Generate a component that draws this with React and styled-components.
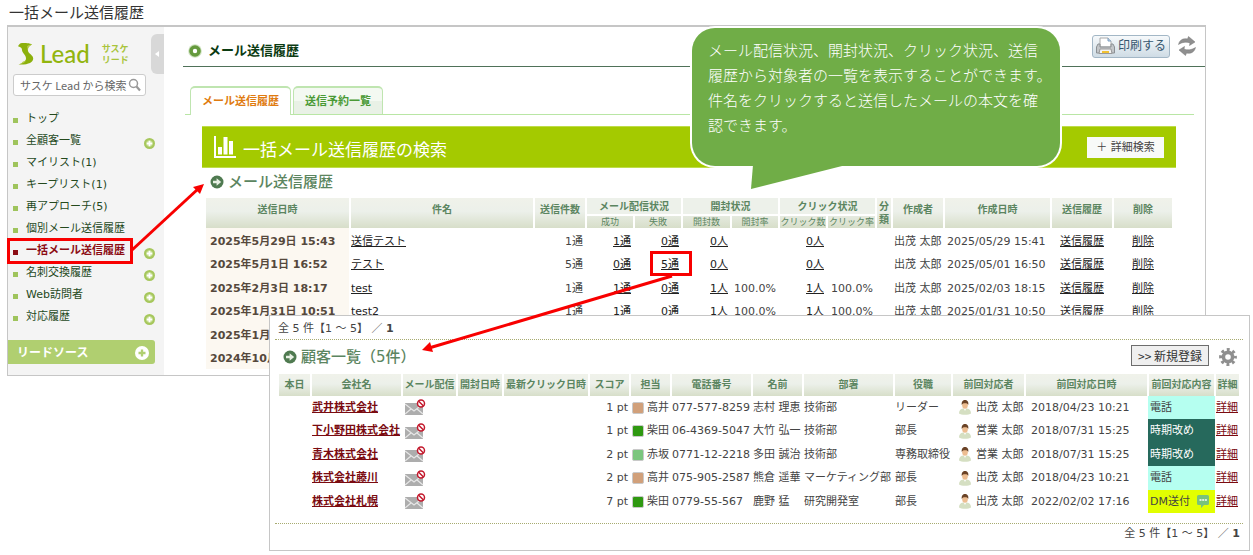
import React from "react";
import styled, { createGlobalStyle, css } from "styled-components";

const Global = createGlobalStyle`
  *, *::before, *::after { box-sizing: border-box; }
  body { margin: 0; background: #fff; color: #444; font: 11px/16px "DejaVu Sans", "Noto Sans CJK JP", sans-serif; }
  h1, h2, h3, ul, p { margin: 0; padding: 0; font-weight: 400; }
  button, input { font: inherit; color: inherit; margin: 0; }
  svg { display: block; flex: none; }
`;

const Page = styled.div`
  position: relative;
  padding-bottom: 5px;
`;

const DocTitle = styled.h1`
  height: 25px;
  padding-left: 9px;
  font: 15px/24px "Noto Sans CJK JP", sans-serif;
  color: #333;
`;

const Window = styled.div`
  display: flex;
  margin: 0 47px 0 7px;
  border: 1px solid #c6c6c6;
  border-top-width: 2px;
  background: #fff;
`;

/* ---------- sidebar ---------- */
const Sidebar = styled.aside`
  position: relative;
  flex: 0 0 156px;
  background: #f4f4f4;
  padding-top: 15px;
`;

const Handle = styled.button`
  position: absolute;
  top: 7px;
  right: 0;
  width: 13px;
  height: 40px;
  padding: 0 0 0 3px;
  border: 0;
  border-radius: 6px 0 0 6px;
  background: #d8d8d8;
`;

const Brand = styled.a`
  display: flex;
  align-items: center;
  height: 24px;
  padding-left: 10px;
  text-decoration: none;
  color: #92b50e;
`;

const BrandName = styled.span`
  margin-left: 6px;
  font: 500 24px/24px Lato, sans-serif;
`;

const BrandKana = styled.span`
  margin-left: 12px;
  font: 700 9px/11px "Noto Sans CJK JP", sans-serif;
  color: #a9c43c;
`;

const SearchBox = styled.label`
  display: flex;
  align-items: center;
  width: 133px;
  height: 22px;
  margin: 8px 0 12px 5px;
  padding: 0 4px 0 6px;
  border: 1px solid #ccc;
  border-radius: 3px;
  background: #fff;
`;

const SearchInput = styled.input`
  flex: 1;
  min-width: 0;
  padding: 0;
  border: 0;
  outline: 0;
  background: none;
  font: 11px/18px "Noto Sans CJK JP", sans-serif;
  &::placeholder { color: #666; opacity: 1; }
`;

const Nav = styled.ul`
  list-style: none;
`;

const NavItem = styled.li`
  position: relative;
  display: flex;
  align-items: center;
  height: 22px;
  padding: 0 9px 0 5px;
  &::before {
    content: "";
    width: 5px;
    height: 5px;
    margin-top: 3px;
    background: ${(p) => (p.$current ? "#8c0d14" : "#9fc45c")};
  }
  ${(p) =>
    p.$current &&
    css`
      &::after {
        content: "";
        position: absolute;
        inset: -2px 31px -2px -1px;
        border: 3px solid #f80000;
      }
    `}
`;

const NavLink = styled.a`
  flex: 1;
  padding-left: 8px;
  white-space: nowrap;
  text-decoration: none;
  color: ${(p) => (p.$current ? "#8c0d14" : "#24491c")};
  font-weight: ${(p) => (p.$current ? 700 : 400)};
`;

const IconButton = styled.button`
  display: block;
  padding: 0;
  border: 0;
  background: none;
`;

const NavAdd = styled(IconButton)`
  padding-top: 4px;
`;

const SourceBar = styled.div`
  display: flex;
  align-items: center;
  justify-content: space-between;
  height: 24px;
  margin: 12px 9px 0 0;
  padding: 2px 6px 0 9px;
  border-radius: 0 3px 3px 0;
  background: #b0cf70;
  color: #fff;
  font-size: 12px;
  font-weight: 700;
`;

/* ---------- history window ---------- */
const Main = styled.main`
  flex: 1;
  min-width: 0;
  padding-bottom: 6px;
`;

const TopBar = styled.header`
  display: flex;
  align-items: center;
  height: 40px;
  margin-left: 19px;
  padding: 9px 9px 0 5px;
  gap: 6px;
  border-bottom: 1px solid #4f7159;
`;

const ScreenTitle = styled.h2`
  flex: 1;
  font-size: 13px;
  font-weight: 700;
  color: #0b3b12;
`;

const PrintButton = styled.button`
  display: flex;
  align-items: center;
  gap: 3px;
  width: 78px;
  height: 23px;
  margin-bottom: 10px;
  padding: 0 3px;
  border: 1px solid #a3b7c6;
  border-radius: 3px;
  background: linear-gradient(#f6f9fb, #cfdce5);
  color: #35566f;
  white-space: nowrap;
  font-size: 12px;
`;

const Refresh = styled(IconButton)`
  margin: 0 0 10px 2px;
`;

const Tabs = styled.nav`
  display: flex;
  align-items: flex-end;
  gap: 2px;
  height: 48px;
  margin: 0 11px 0 21px;
  padding-left: 5px;
  border-bottom: 1px solid #b9e6a5;
`;

const Tab = styled.a`
  height: ${(p) => (p.$active ? 29 : 28)}px;
  margin-bottom: ${(p) => (p.$active ? -1 : 0)}px;
  padding: 0 11px;
  border: 1px solid #bfe5b0;
  border-top-width: 2px;
  border-bottom: 0;
  border-radius: 5px 5px 0 0;
  background: ${(p) => (p.$active ? "#fff" : "linear-gradient(#f4f9f2 50%, #e9f1e6 51%)")};
  color: ${(p) => (p.$active ? "#e07b10" : "#4a9a35")};
  font-weight: 700;
  line-height: 27px;
  text-decoration: none;
`;

const Banner = styled.section`
  display: flex;
  align-items: center;
  height: 42px;
  margin: 11px 29px 0 38px;
  padding: 0 12px;
  gap: 7px;
  border: 1px solid #bedc4a;
  border-width: 1px 0;
  background: #a4ca00;
`;

const BannerTitle = styled.h3`
  flex: 1;
  padding-top: 3px;
  font: 17px/24px "Noto Sans CJK JP", sans-serif;
  color: #fff;
`;

const DetailButton = styled.button`
  width: 77px;
  height: 21px;
  padding: 0;
  border: 0;
  background: #f8faf8;
  line-height: 19px;
  white-space: nowrap;
`;

const SectionHead = styled.div`
  display: flex;
  align-items: center;
  gap: 4px;
`;

const HistoryHead = styled(SectionHead)`
  height: 30px;
  padding: 0 0 2px 46px;
`;

const SectionTitle = styled.h3`
  padding-bottom: 1px;
  font-size: 15px;
  font-weight: 500;
  line-height: 20px;
  color: #5b8560;
`;

/* ---------- tables ---------- */
const Grid = styled.table`
  table-layout: fixed;
  border-collapse: separate;
  border-spacing: 2px 0;
  line-height: 16px;
`;

const HistoryTable = styled(Grid)`
  width: calc(100% - 71px);
  margin-left: 40px;
  tbody td { padding-top: 3px; }
`;

const CustomerTable = styled(Grid)`
  width: calc(100% - 15px);
  margin-left: 7px;
`;

const Col = styled.col`
  width: ${(p) => (p.$w ? p.$w + "px" : "auto")};
`;

const Th = styled.th`
  height: ${(p) => p.$h}px;
  padding: 0 0 ${(p) => p.$drop || 0}px;
  background: linear-gradient(#f0f2ea, #ecf0ea 45%, #d7dec9);
  color: #5b8560;
  font-size: 10px;
  line-height: 13px;
  white-space: ${(p) => (p.$wrap ? "normal" : "nowrap")};
`;

const GroupTh = styled(Th)`
  border-bottom: 2px solid #fff;
  background: #edf1ea;
  background-clip: padding-box;
`;

const SubTh = styled(Th)`
  background: linear-gradient(#e5eadf, #d7dec9);
  font-size: 9px;
  line-height: 12px;
  font-weight: 400;
`;

const Row = styled.tr`
  height: ${(p) => p.$h}px;
`;

const Td = styled.td`
  padding: 0 ${(p) => (p.$pad === undefined ? 2 : p.$pad)}px;
  text-align: ${(p) => p.$align || "left"};
  white-space: nowrap;
`;

const DateTd = styled(Td)`
  padding-left: 4px;
  background: #fcf8f1;
  color: #55483c;
  font-weight: 700;
`;

const CellLink = styled.a`
  position: relative;
  color: #222;
  text-underline-offset: 1px;
  ${(p) =>
    p.$marked &&
    css`
      &::after {
        content: "";
        position: absolute;
        inset: -7px -13px -5px -11px;
        border: 3px solid #f80000;
      }
    `}
`;

const MaroonLink = styled.a`
  color: #7a0a10;
  font-weight: ${(p) => (p.$bold ? 700 : 400)};
  text-underline-offset: 1px;
`;

/* ---------- customer window ---------- */
const CustomerWindow = styled.section`
  position: relative;
  margin: -61px 3px 0 269px;
  border: 1px solid #c6c6c6;
  background: #fff;
`;

const Pager = styled.p`
  height: 24px;
  margin: 0 6px 0 5px;
  padding-left: 3px;
  border-bottom: 1px dotted #a7ab70;
  line-height: 25px;
`;

const BottomPager = styled(Pager)`
  height: 27px;
  margin-top: 10px;
  padding-right: 3px;
  border-top: 1px dotted #a7ab70;
  border-bottom: 0;
  line-height: 20px;
  text-align: right;
`;

const CustomerHead = styled(SectionHead)`
  height: 34px;
  padding: 0 12px 0 13px;
`;

const RegisterButton = styled.button`
  width: 78px;
  height: 21px;
  margin: 0 6px 3px auto;
  padding: 0;
  border: 1px solid #6d6d6d;
  background: #efefef;
  color: #333;
  font: 12px/18px "Noto Sans CJK JP", sans-serif;
  white-space: nowrap;
`;

const IconText = styled.span`
  display: flex;
  align-items: center;
  gap: ${(p) => p.$gap}px;
`;

const Swatch = styled.i`
  width: 12px;
  height: 12px;
  border: 1px solid #c9c9c9;
  border-radius: 2px;
  background: ${(p) => p.$color};
`;

const StatusTd = styled(Td)`
  background: ${(p) => p.$tone.bg};
  color: ${(p) => p.$tone.fg};
  box-shadow: -1px 0 ${(p) => p.$tone.bg}, 1px 0 ${(p) => p.$tone.bg};
`;

/* ---------- annotations ---------- */
const Callout = styled.aside`
  position: absolute;
  top: 28px;
  right: 193px;
  width: 368px;
  height: 138px;
  padding: 9px 0 0 16px;
  border-radius: 23px;
  background: #70ad47;
  box-shadow: 0 0 0 2px #fff;
  color: #fff;
  font: 300 15px/25px "Noto Sans CJK JP", sans-serif;
  white-space: nowrap;
`;

const CalloutTail = styled.svg`
  position: absolute;
  top: 137px;
  left: 58px;
`;

const Arrow = styled.svg`
  position: absolute;
  top: ${(p) => p.$top}px;
  left: ${(p) => p.$left}px;
  pointer-events: none;
`;

/* ---------- icons ---------- */
const PlusBadge = ({ size = 11, ring = "#a6c75c", cross = "#fff" }) => (
  <svg width={size} height={size} viewBox="0 0 12 12">
    <circle cx="6" cy="6" r="6" fill={ring} />
    {cross === "#fff" && <circle cx="6" cy="6" r="3.6" fill="#c4dc8f" />}
    <path d="M6 3v6M3 6h6" stroke={cross} strokeWidth="2" />
  </svg>
);

const ArrowBadge = () => (
  <svg width="14" height="14" viewBox="0 0 14 14">
    <circle cx="7" cy="7" r="6.5" fill="#4f7a50" />
    <path d="M3 5.8h3.6V3.2L11.2 7l-4.600 3.800V8.200H3z" fill="#e8f0e4" />
  </svg>
);

const LogoMark = () => (
  <svg width="16" height="22" viewBox="0 0 16 22">
    <path d="M4 0C7 0 12 0 14 1.500 10.500 3 9.300 5 10 8c.8 3 5.200 4 5.200 7.500C15.200 19.500 10 22 .5 21.500 5 20 8 18 8 15.500 8 12 4 10 4 7 4 5 3 4 0 3.200 1 1.200 2 .3 4 0z" fill="#8cb00c" />
    <path d="M9 3.500C10 2 12 1.500 14 1.500 11 3 10 4.500 10 7zM.5 21.500c2-.4 3.500-1.500 4.500-3l3-1C7 19.500 4 21 .5 21.500z" fill="#b6cc4e" />
  </svg>
);

const SearchIcon = () => (
  <svg width="13" height="14" viewBox="0 0 13 14" fill="none" stroke="#999">
    <circle cx="5.500" cy="5.500" r="4" strokeWidth="1.500" />
    <path d="M8.500 8.500l3.500 4" strokeWidth="2.200" />
  </svg>
);

const RingIcon = () => (
  <svg width="14" height="14" viewBox="0 0 14 14">
    <circle cx="7" cy="7" r="6.800" fill="#cfe3c0" />
    <circle cx="7" cy="7" r="4" fill="#fff" stroke="#659a3d" strokeWidth="3.600" />
  </svg>
);

const PrinterIcon = () => (
  <svg width="19" height="18" viewBox="0 0 19 18">
    <path d="M4 1h8l3 3v6H4z" fill="#fff" stroke="#aaa" />
    <path d="M12 1v3h3" fill="#b9cfe4" stroke="#7f9fc0" />
    <path d="M2 7h2v3h11V7h2l1.500 3v6h-18v-6z" fill="#c3c6c9" stroke="#8b9094" />
    <path d="M4 12h11l1 4.500H3z" fill="#f4f4f4" stroke="#999" />
    <path d="M6 14h7v2H6z" fill="#f1c232" />
  </svg>
);

const RefreshIcon = () => (
  <svg width="18" height="20" viewBox="0 0 18 20" fill="#8f8f8f" stroke="#777" strokeWidth=".5">
    <path d="M.5 8.500C1.500 4 5 2 9.500 3L10.500.5 17 6l-5.500 3.500L12 7C8.500 5.500 4.500 6 .5 8.500z" />
    <path d="M17.500 11.500c-1 4.500-4.500 6.500-9 5.500l-1 2.500L1 14l5.500-3.500L6 13c3.500 1.500 7.500 1 11.500-1.500z" />
  </svg>
);

const ChartIcon = () => (
  <svg width="22" height="22" viewBox="0 0 22 22" fill="#fff">
    <path d="M0 0h2v20h20v2H0z" />
    <path d="M4 11h4v7.500H4zM9.500 1h4v17.500h-4zM15 5h4v13.500h-4z" />
  </svg>
);

const GearIcon = () => (
  <svg width="18" height="18" viewBox="0 0 18 18" fill="none" stroke="#8f8f8f">
    <circle cx="9" cy="9" r="7.200" strokeWidth="3.400" strokeDasharray="2.828 2.827" strokeDashoffset="1.414" />
    <circle cx="9" cy="9" r="4.600" strokeWidth="3.600" />
  </svg>
);

const MailOffIcon = () => (
  <svg width="21" height="17" viewBox="0 0 21 17">
    <path d="M0 4h18v12H0z" fill="#adadad" />
    <path d="M0 5l9 7 9-7M0 15l6-5M18 15l-6-5" fill="none" stroke="#e6e6e6" strokeWidth="1.300" />
    <circle cx="16" cy="4.500" r="3.500" fill="#fff" stroke="#c3192d" strokeWidth="1.500" />
    <path d="M13.500 2l5 5" stroke="#c3192d" strokeWidth="1.500" />
  </svg>
);

const PersonIcon = () => (
  <svg width="12" height="15" viewBox="0 0 12 15">
    <path d="M0 13.500c0-3 1.500-4.700 4-5h4c2.500.3 4 2 4 5-2 1.800-10 1.800-12 0z" fill="#d5dfc2" />
    <path d="M4.500 8L6 11l1.500-3z" fill="#fff" />
    <ellipse cx="6" cy="5.200" rx="2.800" ry="3.600" fill="#edbd91" />
    <path d="M2.800 5C2.200 1.500 4 0 6 0s4 1.500 3.200 5C8.700 3.500 7.500 3 6 3.200 4.500 3 3.400 3.700 2.800 5z" fill="#6b4327" />
  </svg>
);

const CommentIcon = () => (
  <svg width="12" height="13" viewBox="0 0 12 13">
    <path d="M1.500 0h9Q12 0 12 1.500v7Q12 10 10.500 10H7l-3 3v-3H1.500Q0 10 0 8.500v-7Q0 0 1.500 0z" fill="#79c27d" />
    <path d="M2.500 4.200h2v1.600h-2zM5.200 4.200h2v1.600h-2zM7.900 4.200h2v1.600h-2z" fill="#fff" />
  </svg>
);

/* ---------- data ---------- */
const NAV = [
  ["トップ"],
  ["全顧客一覧", true],
  ["マイリスト(1)"],
  ["キープリスト(1)"],
  ["再アプローチ(5)"],
  ["個別メール送信履歴"],
  ["一括メール送信履歴", true, true],
  ["名刺交換履歴", true],
  ["Web訪問者", true],
  ["対応履歴", true],
];

const HISTORY_COLS = [143, 0, 50, 46, 46, 47, 46, 46, 47, 14, 50, 105, 60, 58];

const HISTORY = [
  ["2025年5月29日 15:43", "送信テスト", "1通", "1通", "0通", "0人", "", "2025/05/29 15:41"],
  ["2025年5月1日 16:52", "テスト", "5通", "0通", "5通", "0人", "", "2025/05/01 16:50"],
  ["2025年2月3日 18:17", "test", "1通", "1通", "0通", "1人", "100.0%", "2025/02/03 18:15"],
  ["2025年1月31日 10:51", "test2", "1通", "1通", "0通", "1人", "100.0%", "2025/01/31 10:50"],
];

/* older mailings, listed by date only */
const OLDER = ["2025年1月", "2024年10月"];

const CUSTOMER_COLS = [31, 0, 53, 44, 84, 39, 39, 79, 49, 89, 56, 71, 121, 65, 23];
const CUSTOMER_HEADS = ["本日", "会社名", "メール配信", "開封日時", "最新クリック日時", "スコア", "担当", "電話番号", "名前", "部署", "役職", "前回対応者", "前回対応日時", "前回対応内容", "詳細"];

const TONES = {
  電話: { bg: "#b5fff0", fg: "#444" },
  時期改め: { bg: "#26695c", fg: "#fff" },
  DM送付: { bg: "#e2ff00", fg: "#444" },
};
const OWNERS = { 高井: "#d1a07a", 柴田: "#2f9911", 赤坂: "#7bc67e" };

const CUSTOMERS = [
  ["武井株式会社", 1, "高井", "077-577-8259", "志村 理恵", "技術部", "リーダー", "出茂 太郎", "2018/04/23 10:21", "電話"],
  ["下小野田株式会社", 1, "柴田", "06-4369-5047", "大竹 弘一", "技術部", "部長", "営業 太郎", "2018/07/31 15:25", "時期改め"],
  ["青木株式会社", 2, "赤坂", "0771-12-2218", "多田 誠治", "技術部", "専務取締役", "営業 太郎", "2018/07/31 15:25", "時期改め"],
  ["株式会社藤川", 2, "高井", "075-905-2587", "熊倉 遥華", "マーケティング部", "部長", "出茂 太郎", "2018/04/23 10:21", "電話"],
  ["株式会社札幌", 7, "柴田", "0779-55-567", "鹿野 猛", "研究開発室", "部長", "出茂 太郎", "2022/02/02 17:16", "DM送付"],
];

function HistoryRow({ row, index }) {
  const [sent, subject, total, ok, ng, count, rate, created] = row;
  return (
    <Row $h={index % 2 ? 23 : 24}>
      <DateTd>{sent}</DateTd>
      <Td $pad={0}><CellLink href="#">{subject}</CellLink></Td>
      <Td $align="right">{total}</Td>
      <Td $align="right"><CellLink href="#">{ok}</CellLink></Td>
      <Td $align="right"><CellLink href="#" $marked={ng === "5通"}>{ng}</CellLink></Td>
      <Td $align="right"><CellLink href="#">{count}</CellLink></Td>
      <Td $align="right">{rate}</Td>
      <Td $align="right"><CellLink href="#">{count}</CellLink></Td>
      <Td $align="right">{rate}</Td>
      <Td />
      <Td $pad={1}>出茂 太郎</Td>
      <Td>{created}</Td>
      <Td $align="center"><CellLink href="#">送信履歴</CellLink></Td>
      <Td $align="center"><CellLink href="#">削除</CellLink></Td>
    </Row>
  );
}

function CustomerRow({ row, index }) {
  const [company, score, owner, tel, name, dept, post, contact, date, status] = row;
  return (
    <Row $h={index % 2 ? 24 : 23}>
      <Td />
      <Td $pad={0}><MaroonLink href="#" $bold>{company}</MaroonLink></Td>
      <Td><MailOffIcon /></Td>
      <Td />
      <Td />
      <Td $pad={1} $align="right">{score} pt</Td>
      <Td $pad={1}><IconText $gap={3}><Swatch $color={OWNERS[owner]} />{owner}</IconText></Td>
      <Td $pad={0}>{tel}</Td>
      <Td $pad={0}>{name}</Td>
      <Td $pad={0}>{dept}</Td>
      <Td $pad={0}>{post}</Td>
      <Td $pad={6}><IconText $gap={5}><PersonIcon />{contact}</IconText></Td>
      <Td $pad={5}>{date}</Td>
      <StatusTd $pad={1} $tone={TONES[status]}>
        <IconText $gap={7}>{status}{status === "DM送付" && <CommentIcon />}</IconText>
      </StatusTd>
      <Td $pad={0}><MaroonLink href="#">詳細</MaroonLink></Td>
    </Row>
  );
}

const PageCount = () => (
  <>全 5 件【1 ～ 5】 ／ <b>1</b></>
);

export default function App() {
  return (
    <Page>
      <Global />
      <DocTitle>一括メール送信履歴</DocTitle>

      <Window>
        <Sidebar>
          <Handle aria-label="メニューを閉じる">
            <svg width="6" height="8" viewBox="0 0 6 8"><path d="M5 1v6L1 4z" fill="#fff" /></svg>
          </Handle>
          <Brand href="#">
            <LogoMark />
            <BrandName>Lead</BrandName>
            <BrandKana>サスケ<br />リード</BrandKana>
          </Brand>
          <SearchBox>
            <SearchInput type="text" aria-label="検索" placeholder="サスケ Lead から検索" />
            <SearchIcon />
          </SearchBox>
          <Nav>
            {NAV.map(([label, add, current]) => (
              <NavItem key={label} $current={current}>
                <NavLink href="#" $current={current}>{label}</NavLink>
                {add && <NavAdd aria-label={label + "を開く"}><PlusBadge /></NavAdd>}
              </NavItem>
            ))}
          </Nav>
          <SourceBar>
            リードソース
            <IconButton aria-label="リードソースを開く"><PlusBadge size={14} ring="#ffffff" cross="#b0cf70" /></IconButton>
          </SourceBar>
        </Sidebar>

        <Main>
          <TopBar>
            <RingIcon />
            <ScreenTitle>メール送信履歴</ScreenTitle>
            <PrintButton><PrinterIcon />印刷する</PrintButton>
            <Refresh aria-label="更新"><RefreshIcon /></Refresh>
          </TopBar>
          <Tabs>
            <Tab href="#" $active>メール送信履歴</Tab>
            <Tab href="#">送信予約一覧</Tab>
          </Tabs>
          <Banner>
            <ChartIcon />
            <BannerTitle>一括メール送信履歴の検索</BannerTitle>
            <DetailButton>＋ 詳細検索</DetailButton>
          </Banner>
          <HistoryHead>
            <ArrowBadge />
            <SectionTitle>メール送信履歴</SectionTitle>
          </HistoryHead>
          <HistoryTable>
            <colgroup>{HISTORY_COLS.map((w, i) => <Col key={i} $w={w} />)}</colgroup>
            <thead>
              <tr>
                <Th rowSpan={2} $drop={8}>送信日時</Th>
                <Th rowSpan={2} $drop={8}>件名</Th>
                <Th rowSpan={2} $drop={8}>送信件数</Th>
                <GroupTh colSpan={2} $h={18}>メール配信状況</GroupTh>
                <GroupTh colSpan={2} $h={18}>開封状況</GroupTh>
                <GroupTh colSpan={2} $h={18}>クリック状況</GroupTh>
                <Th rowSpan={2} $wrap>分類</Th>
                <Th rowSpan={2} $drop={8}>作成者</Th>
                <Th rowSpan={2} $drop={8}>作成日時</Th>
                <Th rowSpan={2} $drop={8}>送信履歴</Th>
                <Th rowSpan={2} $drop={8}>削除</Th>
              </tr>
              <tr>
                {["成功", "失敗", "開封数", "開封率", "クリック数", "クリック率"].map((t) => (
                  <SubTh key={t} $h={12}>{t}</SubTh>
                ))}
              </tr>
            </thead>
            <tbody>
              {HISTORY.map((row, i) => <HistoryRow key={row[0]} row={row} index={i} />)}
              {OLDER.map((date, i) => (
                <Row key={date} $h={i % 2 ? 23 : 24}>
                  <DateTd>{date}</DateTd>
                  <Td colSpan={13} />
                </Row>
              ))}
            </tbody>
          </HistoryTable>
        </Main>
      </Window>

      <CustomerWindow>
        <Pager><PageCount /></Pager>
        <CustomerHead>
          <ArrowBadge />
          <SectionTitle>顧客一覧（5件）</SectionTitle>
          <RegisterButton>&gt;&gt; 新規登録</RegisterButton>
          <IconButton aria-label="設定"><GearIcon /></IconButton>
        </CustomerHead>
        <CustomerTable>
          <colgroup>{CUSTOMER_COLS.map((w, i) => <Col key={i} $w={w} />)}</colgroup>
          <thead>
            <tr>{CUSTOMER_HEADS.map((t) => <Th key={t} $h={22} $drop={2}>{t}</Th>)}</tr>
          </thead>
          <tbody>
            {CUSTOMERS.map((row, i) => <CustomerRow key={row[0]} row={row} index={i} />)}
          </tbody>
        </CustomerTable>
        <BottomPager><PageCount /></BottomPager>
      </CustomerWindow>

      <Callout>
        メール配信状況、開封状況、クリック状況、送信<br />
        履歴から対象者の一覧を表示することができます。<br />
        件名をクリックすると送信したメールの本文を確<br />
        認できます。
        <CalloutTail width="100" height="26" viewBox="0 0 100 26">
          <path d="M3 0h93L1 24z" fill="#70ad47" />
        </CalloutTail>
      </Callout>

      <Arrow $top={180} $left={130} width="80" height="75" viewBox="0 0 80 75">
        <path d="M2 70L68 9" stroke="#f80000" strokeWidth="3" />
        <path d="M74 4L70 14L63 7z" fill="#f80000" />
      </Arrow>
      <Arrow $top={270} $left={415} width="265" height="90" viewBox="0 0 265 90">
        <path d="M257 6L14 78" stroke="#f80000" strokeWidth="3" />
        <path d="M7 80L15 72L18 82z" fill="#f80000" />
      </Arrow>
    </Page>
  );
}
